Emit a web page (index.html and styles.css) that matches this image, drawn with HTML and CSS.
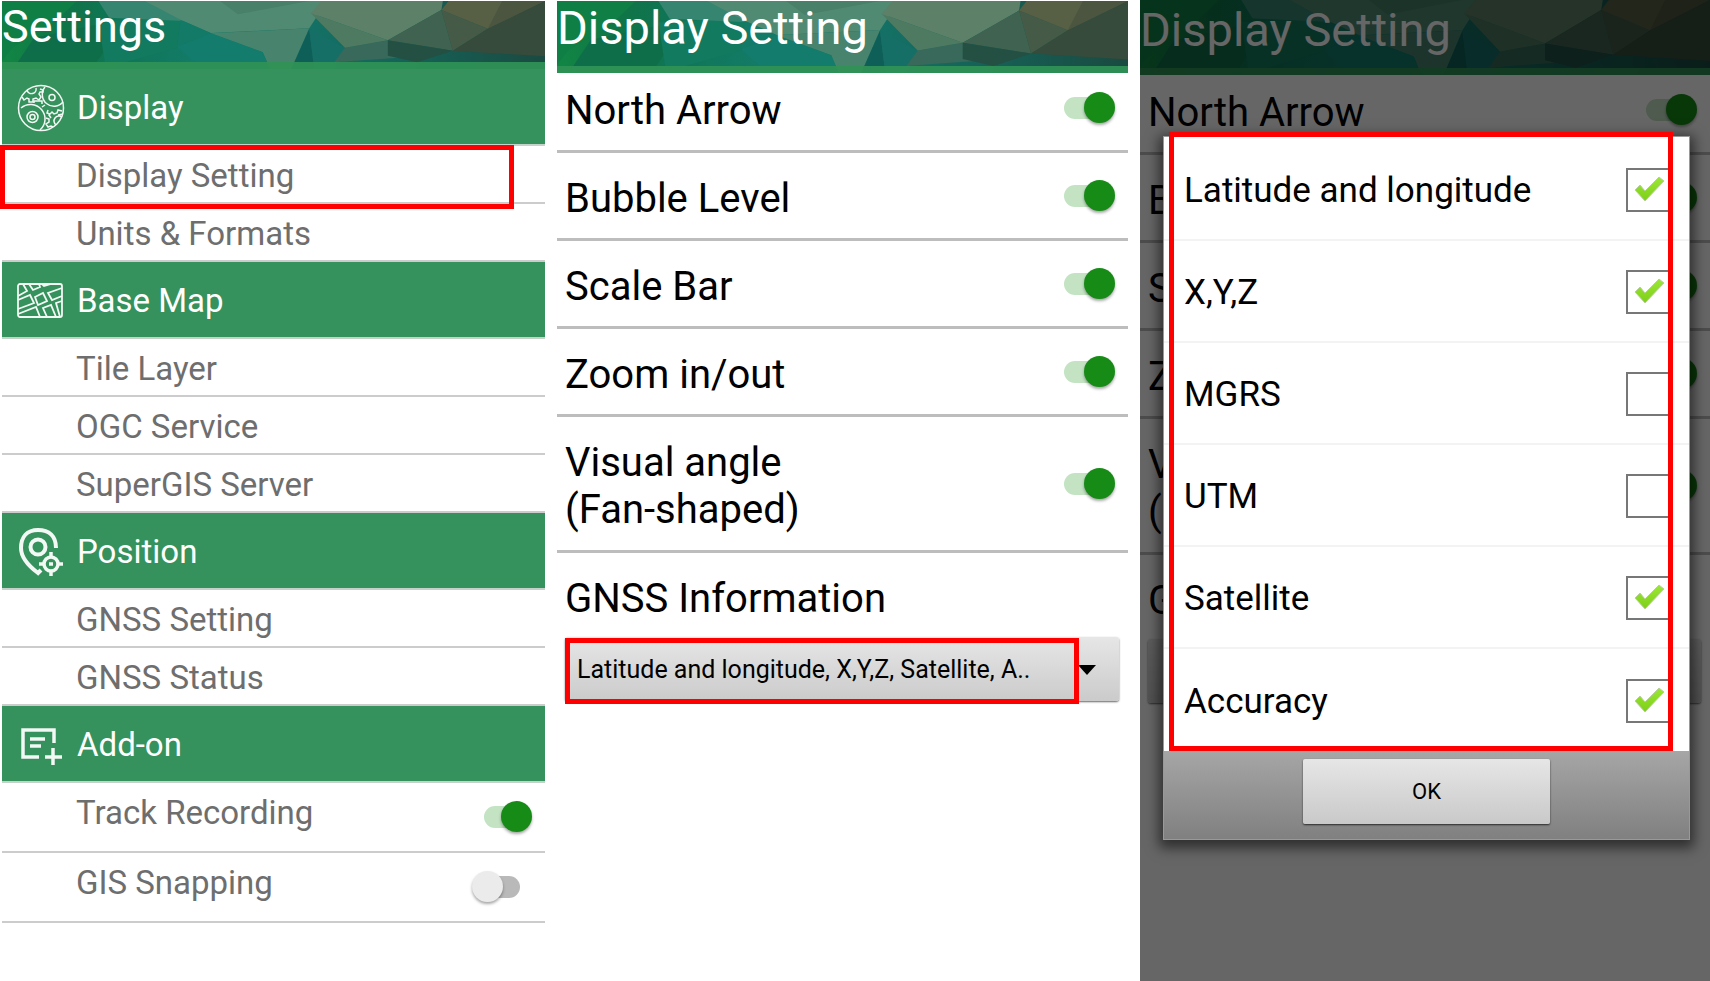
FILE: index.html
```html
<!DOCTYPE html>
<html lang="en">
<head>
    <meta charset="UTF-8">
    <meta name="viewport" content="width=device-width, initial-scale=1.0">
    <title>Settings</title>
    <link rel="stylesheet" href="styles.css">
</head>
<body>
    <!-- shared header artwork -->
    <svg class="defs" aria-hidden="true">
        <defs>
            <linearGradient id="base" x1="0" x2="1" y1="0" y2="0">
                <stop offset="0" stop-color="#128644"/>
                <stop offset="0.12" stop-color="#0f7447"/>
                <stop offset="0.22" stop-color="#107558"/>
                <stop offset="0.4" stop-color="#147d6c"/>
                <stop offset="0.62" stop-color="#146d62"/>
                <stop offset="1" stop-color="#1a4a41"/>
            </linearGradient>
            <linearGradient id="tick" x1="0" x2="0" y1="0" y2="1">
                <stop offset="0" stop-color="#9be636"/>
                <stop offset="1" stop-color="#7ecf16"/>
            </linearGradient>
        </defs>
        <symbol id="art" viewBox="0 0 1520 204" preserveAspectRatio="none">
            <rect width="1520" height="204" fill="url(#base)"/>
            <path fill="#0f7f46" d="M0 0h210l-60 60L30 140 0 180z"/>
            <path fill="#0e6e49" d="M90 110l180-40 30 60-40 60H40z"/>
            <path fill="#127a5e" d="M270 60l230-10-10 90-200 60z"/>
            <path fill="#358570" d="M270 0h150l90 60-210-10z"/>
            <path fill="#518a73" d="M400 0h510l-50 82-275 14-85-40z"/>
            <path fill="#48806a" d="M610 0h250l-200 40z"/>
            <path fill="#127a66" d="M500 57l85 40-95 40z"/>
            <path fill="#47836d" d="M585 97l275-15-50 122h-60l-20-50z"/>
            <path fill="#137c6c" d="M490 137l95-40 145 57 20 50H560z"/>
            <path fill="#0f5f59" d="M860 84l14 120h-64z"/>
            <path fill="#166f67" d="M860 84l100 56-34 64h-52z"/>
            <path fill="#38695a" d="M960 140l120-22 60 50-210 16z"/>
            <path fill="#4f7a62" d="M864 36l216 82-120 22z"/>
            <path fill="#5c8168" d="M864 36L894 0h340l-4 27-150 91z"/>
            <path fill="#3f6251" d="M1080 118l150-91 32 122z"/>
            <path fill="#455b47" d="M1230 27l130 56-98 66z"/>
            <path fill="#575f44" d="M1230 27l20-27h270l-160 83z"/>
            <path fill="#4b5540" d="M1400 0h120l-160 83z"/>
            <path fill="#364b3b" d="M1360 83L1520 0v166l-258-17z"/>
            <path fill="#245044" d="M1080 118l182 31-100 35-82-20z"/>
        </symbol>
    </svg>

    <main class="screens">
        <section class="screen menu">
            <header>
                <svg class="art" aria-hidden="true"><use href="#art"/></svg>
                <h1>Settings</h1>
            </header>
            <nav>
                <h2>
                    <svg class="icon" viewBox="0 0 48 48" aria-hidden="true">
                        <g stroke-width="1.5">
                            <circle cx="24" cy="24" r="22.5"/>
                            <path d="M4 24a13 13 0 1 1 19 22"/>
                            <circle cx="15.5" cy="33" r="5.5"/>
                            <circle cx="15.5" cy="33" r="2.5"/>
                            <path d="M28 3a10.500 10.500 0 1 0 18 15"/>
                            <circle cx="35" cy="13.500" r="3"/>
                            <path d="M10 6a4.500 4.500 0 1 0 9-2"/>
                            <path d="M5 13l2 3 3-2 2 1v3h4v-3l3-1 3 2 2-3-2-3 1-2h3V6l-3-1"/>
                            <path d="M17 19v-2h8v3M25 23l3-2"/>
                            <path d="M31 26l-1 3 3 1M29 34l3 1v3l-3 2 2 3 3-1 2 1M45 27l-4-1-1 3-3 1-2-2-3 3 2 3M46 30l-5 1M45 33a5 5 0 0 0-6 8"/>
                        </g>
                    </svg>
                    Display
                </h2>
                <ul>
                    <li class="marked"><a href="#display-setting">Display Setting</a></li>
                    <li><a href="#units">Units &amp; Formats</a></li>
                </ul>
                <h2>
                    <svg class="icon" viewBox="0 0 48 48" aria-hidden="true">
                        <g stroke-width="1.800">
                            <rect x="1" y="7" width="44" height="33" rx="2"/>
                            <path d="M1 19l9-5-4-7M12 7l4 6 7-3-1-3M25 7l2 2 7-2"/>
                            <path d="M18 20l8-4 4 8-9 4z"/>
                            <path d="M1 23l12-5 4 8-16 6M45 11l-14 5 4 7 10-4"/>
                            <path d="M1 37l18-7 4 10M45 24l-6 2 4 14M30 40l-4-9 8-3 5 12"/>
                        </g>
                    </svg>
                    Base Map
                </h2>
                <ul>
                    <li><a href="#tile">Tile Layer</a></li>
                    <li><a href="#ogc">OGC Service</a></li>
                    <li><a href="#supergis">SuperGIS Server</a></li>
                </ul>
                <h2>
                    <svg class="icon" viewBox="0 0 48 48" aria-hidden="true">
                        <g stroke-width="4">
                            <path d="M39 20C39 8 32 2 21 2S4 9 4 20c0 11 9 19 17 25l3-3"/>
                            <circle cx="21" cy="19" r="7.500"/>
                            <g stroke-width="3.500">
                                <circle cx="34" cy="36" r="7"/>
                                <path d="M34 24v5M34 43v5M22 36h5M41 36h5M32 36h4"/>
                            </g>
                        </g>
                    </svg>
                    Position
                </h2>
                <ul>
                    <li><a href="#gnss-setting">GNSS Setting</a></li>
                    <li><a href="#gnss-status">GNSS Status</a></li>
                </ul>
                <h2>
                    <svg class="icon" viewBox="0 0 48 48" aria-hidden="true">
                        <g stroke-width="3.500">
                            <path d="M22 36H6V9h31v13M13 18h15M13 25h11M36 27v17M28 36h17"/>
                        </g>
                    </svg>
                    Add-on
                </h2>
                <ul class="addons">
                    <li><label for="track">Track Recording</label><input class="switch" type="checkbox" id="track" checked></li>
                    <li><label for="snap">GIS Snapping</label><input class="switch" type="checkbox" id="snap"></li>
                </ul>
            </nav>
        </section>

        <section class="screen display">
            <header>
                <svg class="art" aria-hidden="true"><use href="#art"/></svg>
                <h1>Display Setting</h1>
            </header>
            <div class="option"><label for="north">North Arrow</label><input class="switch" type="checkbox" id="north" checked></div>
            <div class="option"><label for="bubble">Bubble Level</label><input class="switch" type="checkbox" id="bubble" checked></div>
            <div class="option"><label for="scale">Scale Bar</label><input class="switch" type="checkbox" id="scale" checked></div>
            <div class="option"><label for="zoom">Zoom in/out</label><input class="switch" type="checkbox" id="zoom" checked></div>
            <div class="option tall"><label for="angle">Visual angle<br>(Fan-shaped)</label><input class="switch" type="checkbox" id="angle" checked></div>
            <div class="gnss">
                <label for="gnss">GNSS Information</label>
                <div class="dropdown marked">
                    <select id="gnss">
                        <option>Latitude and longitude, X,Y,Z, Satellite, A..</option>
                    </select>
                </div>
            </div>
        </section>

        <section class="screen display dimmed">
            <header>
                <svg class="art" aria-hidden="true"><use href="#art"/></svg>
                <h1>Display Setting</h1>
            </header>
            <div class="option"><label for="north2">North Arrow</label><input class="switch" type="checkbox" id="north2" checked></div>
            <div class="option"><label for="bubble2">Bubble Level</label><input class="switch" type="checkbox" id="bubble2" checked></div>
            <div class="option"><label for="scale2">Scale Bar</label><input class="switch" type="checkbox" id="scale2" checked></div>
            <div class="option"><label for="zoom2">Zoom in/out</label><input class="switch" type="checkbox" id="zoom2" checked></div>
            <div class="option tall"><label for="angle2">Visual angle<br>(Fan-shaped)</label><input class="switch" type="checkbox" id="angle2" checked></div>
            <div class="gnss">
                <label for="gnss2">GNSS Information</label>
                <div class="dropdown">
                    <select id="gnss2"><option></option></select>
                </div>
            </div>
            <div class="overlay">
                <form class="dialog">
                    <div class="choices marked">
                        <label>Latitude and longitude <span class="check"><input type="checkbox" checked><svg viewBox="0 0 30 26" aria-hidden="true"><path d="M1 14l5-5 5 6L25 1l5 4-19 20z"/></svg></span></label>
                        <label>X,Y,Z <span class="check"><input type="checkbox" checked><svg viewBox="0 0 30 26" aria-hidden="true"><path d="M1 14l5-5 5 6L25 1l5 4-19 20z"/></svg></span></label>
                        <label>MGRS <span class="check"><input type="checkbox"><svg viewBox="0 0 30 26" aria-hidden="true"><path d="M1 14l5-5 5 6L25 1l5 4-19 20z"/></svg></span></label>
                        <label>UTM <span class="check"><input type="checkbox"><svg viewBox="0 0 30 26" aria-hidden="true"><path d="M1 14l5-5 5 6L25 1l5 4-19 20z"/></svg></span></label>
                        <label>Satellite <span class="check"><input type="checkbox" checked><svg viewBox="0 0 30 26" aria-hidden="true"><path d="M1 14l5-5 5 6L25 1l5 4-19 20z"/></svg></span></label>
                        <label>Accuracy <span class="check"><input type="checkbox" checked><svg viewBox="0 0 30 26" aria-hidden="true"><path d="M1 14l5-5 5 6L25 1l5 4-19 20z"/></svg></span></label>
                    </div>
                    <footer><button type="button">OK</button></footer>
                </form>
            </div>
        </section>
    </main>
</body>
</html>
```

FILE: styles.css
```css
* {
    box-sizing: border-box;
}
body {
    margin: 0;
    background-color: white;
    font-family: Roboto, sans-serif;
    color: #000;
}
.defs {
    position: absolute;
    width: 0;
    height: 0;
}
.screens {
    display: grid;
    grid-template-columns: 543fr 571fr 570fr;
    gap: 12px;
    padding-left: 2px;
    min-height: 100vh;
}
.screen {
    position: relative;
    padding-top: 1px;
    min-width: 0;
}

/* header */
header {
    position: relative;
    height: 68px;
    overflow: hidden;
}
header::after {
    content: "";
    position: absolute;
    left: 0;
    right: 0;
    bottom: 0;
    height: 7px;
    background-color: rgba(48, 146, 86, 0.92);
}
.art {
    position: absolute;
    width: 100%;
    height: 100%;
}
h1 {
    position: relative;
    margin: 0;
    font-size: 45px;
    line-height: 52px;
    font-weight: normal;
    color: white;
}
.display header {
    height: 72px;
}
.display h1 {
    font-size: 47px;
    line-height: 54px;
}

/* settings menu */
h2 {
    display: flex;
    align-items: center;
    gap: 12px;
    height: 77px;
    margin: 0;
    padding: 2px 15px 0;
    border-bottom: 2px solid #c4d2c9;
    background-color: #35925c;
    color: white;
    font-size: 33px;
    font-weight: normal;
}
.icon {
    width: 48px;
    height: 48px;
    fill: none;
    stroke: #f2f8f4;
}
ul {
    margin: 0;
    padding: 0;
    list-style: none;
}
li {
    position: relative;
    display: flex;
    align-items: center;
    justify-content: space-between;
    height: 58px;
    padding: 2px 13px 0 74px;
    border-bottom: 2px solid #ccc;
    font-size: 33px;
    color: #6e6e6e;
}
li a {
    color: inherit;
    text-decoration: none;
}
.addons li {
    height: 70px;
    padding-top: 0;
}
.addons label {
    padding-bottom: 10px;
}

/* red callout frames */
.marked::after {
    content: "";
    position: absolute;
    border: 5px solid #f00;
    pointer-events: none;
}
li.marked::after {
    top: -1px;
    bottom: -7px;
    left: -2px;
    right: 31px;
}

/* on/off switch */
.switch {
    appearance: none;
    position: relative;
    width: 60px;
    height: 32px;
    margin: 0;
}
.switch::before {
    content: "";
    position: absolute;
    top: 5px;
    left: 2px;
    width: 46px;
    height: 22px;
    border-radius: 11px;
    background-color: #b9b9b9;
}
.switch::after {
    content: "";
    position: absolute;
    top: 0;
    left: 0;
    width: 31px;
    height: 31px;
    border-radius: 50%;
    background-color: #ebebeb;
    box-shadow: 0 2px 3px rgba(0, 0, 0, 0.35);
}
.switch:checked::before {
    left: 12px;
    background-color: #c3e3c3;
}
.switch:checked::after {
    left: 29px;
    background-color: #168b16;
}
.display .switch:checked::before {
    left: 9px;
}

/* display options */
.option {
    display: flex;
    align-items: center;
    justify-content: space-between;
    height: 88px;
    padding: 0 13px 0 8px;
    border-bottom: 3px solid #bdbdbd;
    font-size: 40px;
    line-height: 47px;
}
.option label {
    padding-top: 5px;
}
.option:nth-of-type(1) {
    height: 80px;
    padding-bottom: 7px;
}
.option.tall {
    height: 136px;
}
.gnss {
    padding: 22px 9px 0 8px;
    font-size: 40px;
    line-height: 47px;
}
.gnss label {
    display: block;
}
.dropdown {
    position: relative;
    margin-top: 15px;
}
.dropdown::before {
    content: "";
    position: absolute;
    right: 23px;
    top: 28px;
    border: 9px solid transparent;
    border-top: 10px solid #000;
    border-bottom: 0;
}
.dropdown.marked::after {
    top: 1px;
    bottom: -3px;
    left: 0;
    right: 40px;
}
select {
    appearance: none;
    display: block;
    width: 100%;
    height: 64px;
    padding: 0 50px 0 12px;
    border: 0;
    border-radius: 3px;
    background: linear-gradient(#e6e6e6, #cbcbcb);
    box-shadow: 0 1px 2px rgba(0, 0, 0, 0.6);
    color: #000;
    font-family: inherit;
    font-size: 25px;
}

/* dialog over the dimmed screen */
.dimmed {
    padding-top: 0;
}
.dimmed header {
    height: 75px;
}
.dimmed h1 {
    line-height: 60px;
}
.overlay {
    position: absolute;
    inset: 0;
    padding: 136px 20px 0 23px;
    background-color: rgba(0, 0, 0, 0.6);
}
.dialog {
    border: 1px solid #999;
    background-color: white;
    box-shadow: 0 4px 12px 4px rgba(0, 0, 0, 0.55);
}
.choices {
    position: relative;
}
.choices.marked::after {
    top: -5px;
    bottom: 0;
    left: 5px;
    right: 16px;
}
.choices label {
    display: flex;
    align-items: center;
    justify-content: space-between;
    height: 102px;
    padding: 2px 19px 0 20px;
    border-bottom: 2px solid #f3f3f3;
    font-size: 35px;
}
.choices label:first-child {
    height: 104px;
    padding-top: 4px;
}
.choices label:last-child {
    border-bottom: 0;
}
.check {
    position: relative;
    width: 44px;
    height: 44px;
}
.check input {
    appearance: none;
    display: block;
    width: 44px;
    height: 44px;
    margin: 0;
    border: 2px solid #777;
}
.check svg {
    position: absolute;
    top: 8px;
    left: 8px;
    width: 30px;
    height: 26px;
    fill: url(#tick);
    stroke: #b9cfa0;
    visibility: hidden;
}
.check input:checked + svg {
    visibility: visible;
}
.dialog footer {
    display: flex;
    justify-content: center;
    height: 88px;
    padding: 8px 0 15px;
    background: linear-gradient(#a6a6a6, #808080);
}
.dialog button {
    width: 47%;
    border: 0;
    border-radius: 2px;
    background: linear-gradient(#e6e6e6, #c9c9c9);
    box-shadow: 0 1px 2px rgba(0, 0, 0, 0.7);
    color: #000;
    font-family: inherit;
    font-size: 22px;
}
```
